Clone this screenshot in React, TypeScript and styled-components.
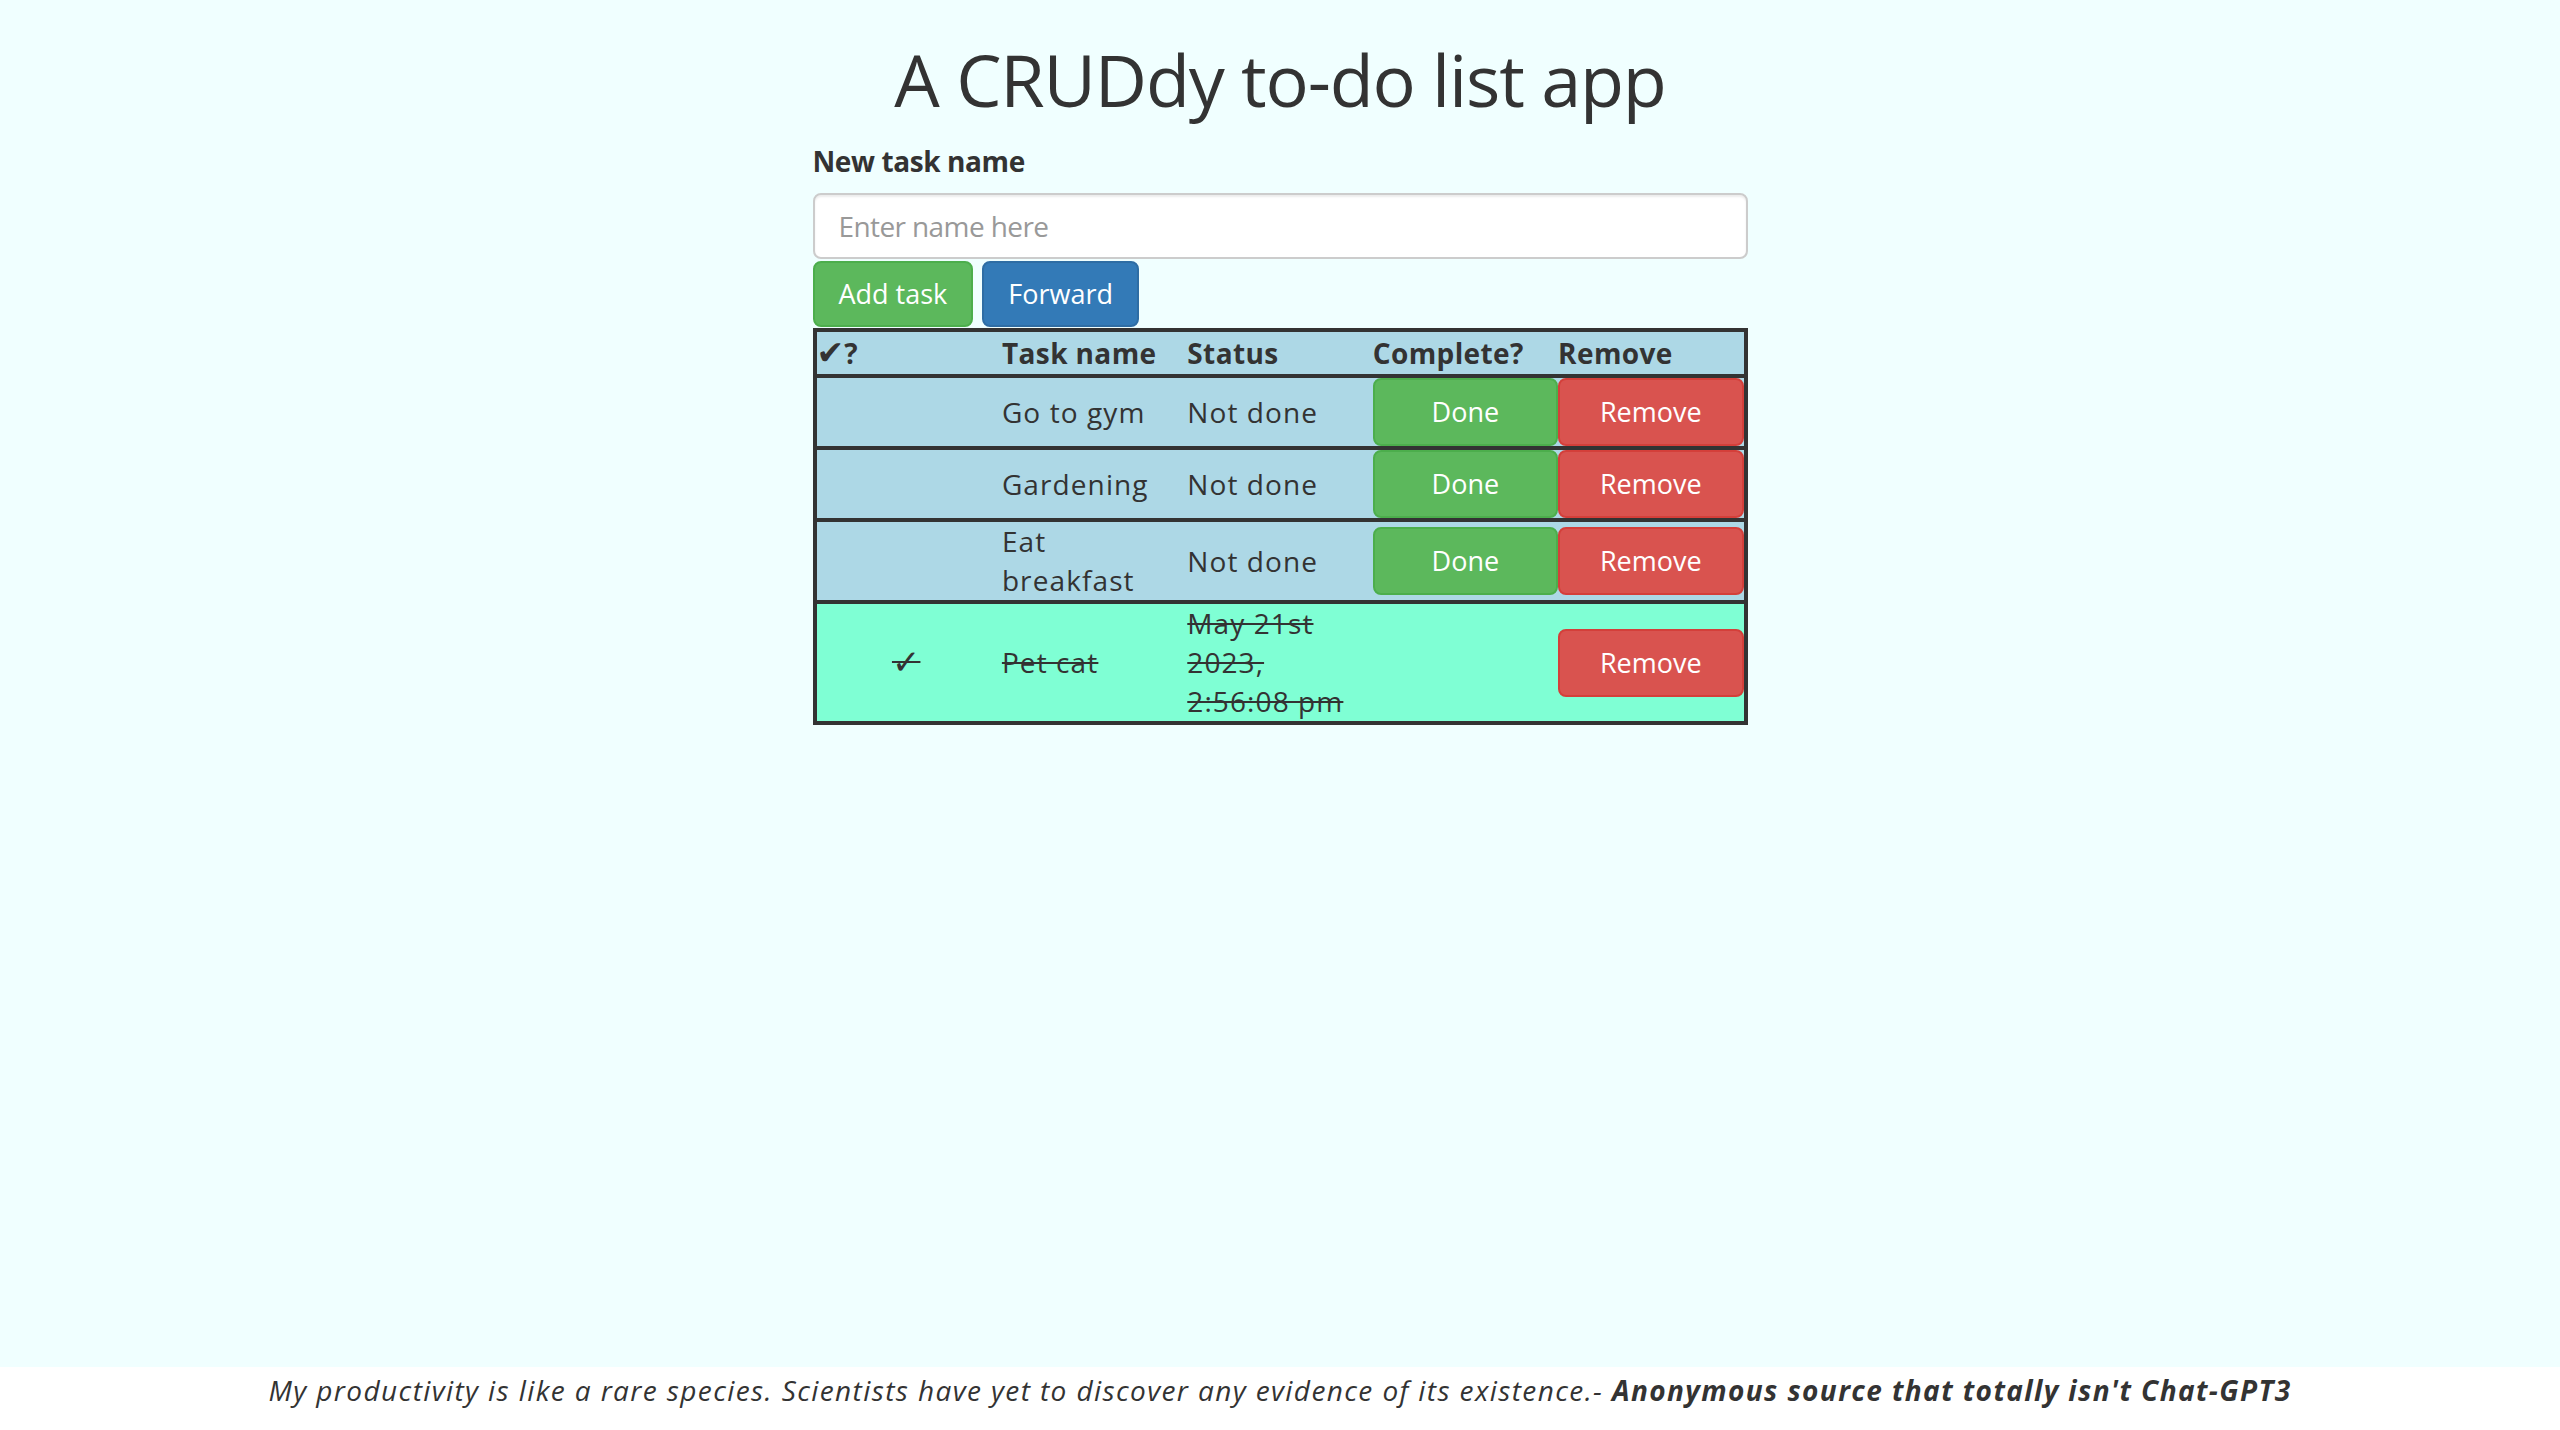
import React from "react";
import styled, { createGlobalStyle } from "styled-components";

const GlobalStyle = createGlobalStyle`
  html, body { margin: 0; padding: 0; }
  body {
    background: #f0ffff;
    color: #333;
    font-family: "Trebuchet MS", "Open Sans", "DejaVu Sans", sans-serif;
    font-size: 28px;
    line-height: 40px;
  }
  * { box-sizing: border-box; }
`;

const Page = styled.div`
  min-height: 100vh;
  display: flex;
  flex-direction: column;
`;

const Main = styled.main`
  flex: 1;
  width: 935px;
  margin: 0 auto;
`;

const Title = styled.h1`
  margin: 40px 0 22px;
  font-size: 72px;
  line-height: 1.1;
  font-weight: 400;
  letter-spacing: -1.2px;
  text-align: center;
  color: #333;
`;

const Label = styled.label`
  display: inline-block;
  font-weight: 700;
  letter-spacing: -0.4px;
  margin-bottom: 12px;
`;

const Input = styled.input`
  display: block;
  width: 100%;
  height: 66px;
  padding: 12px 24px;
  font-family: inherit;
  font-size: 28px;
  line-height: 40px;
  color: #555;
  background: #fff;
  border: 2px solid #ccc;
  border-radius: 8px;
  box-shadow: inset 0 2px 2px rgba(0, 0, 0, 0.075);
  outline: none;
  &::placeholder {
    color: #999;
    letter-spacing: -0.6px;
  }
`;

const ButtonRow = styled.div`
  display: flex;
  gap: 9px;
  margin-top: 2px;
`;

const palette = {
  success: { bg: "#5cb85c", border: "#4cae4c" },
  primary: { bg: "#337ab7", border: "#2e6da4" },
  danger: { bg: "#d9534f", border: "#d43f3a" },
};

type Variant = keyof typeof palette;

const Button = styled.button<{ $variant: Variant; $block?: boolean }>`
  display: ${(p) => (p.$block ? "block" : "inline-block")};
  width: ${(p) => (p.$block ? "100%" : "auto")};
  height: ${(p) => (p.$block ? "68px" : "66px")};
  padding: 11px 24px;
  font-family: inherit;
  font-size: 27px;
  line-height: 40px;
  color: #fff;
  background: ${(p) => palette[p.$variant].bg};
  border: 2px solid ${(p) => palette[p.$variant].border};
  border-radius: 8px;
  cursor: pointer;
  text-align: center;
  white-space: nowrap;
`;

const Table = styled.table`
  width: 100%;
  table-layout: fixed;
  border-collapse: separate;
  border-spacing: 0;
  border: 4px solid #333;
  margin-top: 1px;
`;

const HeadCell = styled.th`
  background: #add8e6;
  text-align: left;
  font-weight: 700;
  letter-spacing: 0.4px;
  padding: 2px 0 1px;
  line-height: 39px;
  border-bottom: 4px solid #333;
  white-space: nowrap;
`;

const Row = styled.tr<{ $done?: boolean }>`
  background: ${(p) => (p.$done ? "#7fffd4" : "#add8e6")};
`;

const Cell = styled.td<{ $center?: boolean; $last?: boolean; $struck?: boolean }>`
  padding: 0 6px 0 0;
  vertical-align: middle;
  line-height: 39px;
  letter-spacing: 1.1px;
  text-align: ${(p) => (p.$center ? "center" : "left")};
  text-decoration: ${(p) => (p.$struck ? "line-through" : "none")};
  border-bottom: ${(p) => (p.$last ? "none" : "4px solid #333")};
`;

const ButtonCell = styled.td<{ $last?: boolean }>`
  padding: 0;
  vertical-align: middle;
  border-bottom: ${(p) => (p.$last ? "none" : "4px solid #333")};
`;

const HeadCheck = styled.span`
  font-family: "DejaVu Sans", sans-serif;
  font-size: 33px;
  line-height: 30px;
  letter-spacing: 0;
`;

const RowCheck = styled.span`
  font-family: "DejaVu Sans", sans-serif;
  font-size: 34px;
  letter-spacing: 0;
`;

const Footer = styled.footer`
  background: #fff;
  padding-top: 3px;
  text-align: center;
  font-style: italic;
  letter-spacing: 1.4px;
`;

const Quote = styled.p`
  margin: 0 0 20px;
`;

type Task = { name: string; done: boolean; status: string };

const tasks: Task[] = [
  { name: "Go to gym", done: false, status: "Not done" },
  { name: "Gardening", done: false, status: "Not done" },
  { name: "Eat breakfast", done: false, status: "Not done" },
  { name: "Pet cat", done: true, status: "May 21st 2023, 2:56:08 pm" },
];

export default function App() {
  return (
    <>
      <GlobalStyle />
      <Page>
        <Main>
          <Title>A CRUDdy to-do list app</Title>
          <Label htmlFor="task">New task name</Label>
          <Input id="task" placeholder="Enter name here" />
          <ButtonRow>
            <Button $variant="success">Add task</Button>
            <Button $variant="primary">Forward</Button>
          </ButtonRow>
          <Table>
            <thead>
              <tr>
                <HeadCell>
                  <HeadCheck>✔</HeadCheck>?
                </HeadCell>
                <HeadCell>Task name</HeadCell>
                <HeadCell>Status</HeadCell>
                <HeadCell>Complete?</HeadCell>
                <HeadCell>Remove</HeadCell>
              </tr>
            </thead>
            <tbody>
              {tasks.map((t, i) => {
                const last = i === tasks.length - 1;
                return (
                  <Row key={t.name} $done={t.done}>
                    <Cell $center $last={last} $struck={t.done}>
                      {t.done ? <RowCheck>✓</RowCheck> : ""}
                    </Cell>
                    <Cell $last={last} $struck={t.done}>
                      {t.name}
                    </Cell>
                    <Cell $last={last} $struck={t.done}>
                      {t.status}
                    </Cell>
                    <ButtonCell $last={last}>
                      {!t.done && (
                        <Button $variant="success" $block>
                          Done
                        </Button>
                      )}
                    </ButtonCell>
                    <ButtonCell $last={last}>
                      <Button $variant="danger" $block>
                        Remove
                      </Button>
                    </ButtonCell>
                  </Row>
                );
              })}
            </tbody>
          </Table>
        </Main>
        <Footer>
          <Quote>
            My productivity is like a rare species. Scientists have yet to discover any evidence of its
            existence.- <b>Anonymous source that totally isn't Chat-GPT3</b>
          </Quote>
        </Footer>
      </Page>
    </>
  );
}
